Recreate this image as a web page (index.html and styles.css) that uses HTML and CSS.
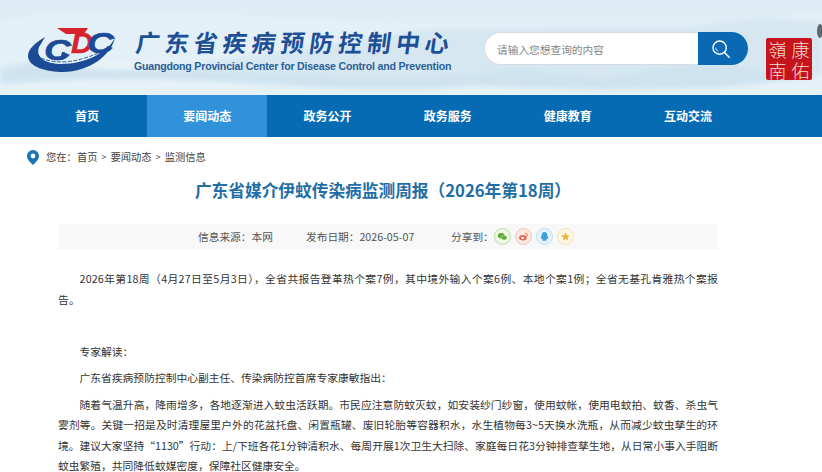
FILE: index.html
```html
<!DOCTYPE html>
<html lang="zh-CN">
<head>
<meta charset="utf-8">
<title>广东省媒介伊蚊传染病监测周报</title>
<link rel="stylesheet" href="styles.css">
</head>
<body>
<header class="masthead">
  <svg class="scenery" viewBox="0 0 822 95" preserveAspectRatio="none" aria-hidden="true">
    <defs>
      <filter id="soft"><feGaussianBlur stdDeviation="2.5"/></filter>
      <filter id="tiny"><feGaussianBlur stdDeviation="0.7"/></filter>
    </defs>
    <g filter="url(#soft)">
      <path d="M0 22 Q90 6 200 14 T470 24 T650 30 L822 14 V60 H0Z" fill="#e3f0f7"/>
      <path d="M0 66 L40 60 L110 72 L240 58 L420 30 L560 28 L680 28 L760 18 L822 22 V95 H0Z" fill="#d6e7f1"/>
      <path d="M0 74 Q30 60 70 66 T180 72 T330 76 T470 74 L520 68 L600 78 L700 62 L822 80 V95 H0Z" fill="#cfe3ef"/>
      <path d="M0 84 Q120 74 260 84 T470 86 L600 90 L720 88 L822 76 V95 H0Z" fill="#e6f2f8"/>
    </g>
    <ellipse class="scenery-tree" cx="820" cy="31" rx="3" ry="7" filter="url(#tiny)"/>
  </svg>
  <div class="brand">
    <svg class="logo" viewBox="0 0 90 50" aria-label="CDC">
      <path d="M18 12 C8 18 1 24 1 31 C1 42 20 47 36 47 C62 47 84 30 88 13 C80 28 58 39 34 39 C20 39 8 33 12 22Z" fill="#1b4a96"/>
      <text class="logo-c" x="17" y="35" textLength="27" lengthAdjust="spacingAndGlyphs">C</text>
      <path d="M30 3 H61 L57 9 H39Z" fill="#d8222c"/>
      <text class="logo-d" x="44" y="28" textLength="22" lengthAdjust="spacingAndGlyphs">D</text>
      <text class="logo-c" x="60" y="28" textLength="27" lengthAdjust="spacingAndGlyphs">C</text>
      <path d="M33 35 L35 27 H38 L36 35Z" fill="#1b4a96"/>
      <path d="M14 33 Q40 44 80 24" fill="none" stroke="#1b4a96" stroke-width=".9" stroke-dasharray="4 1.5"/>
    </svg>
    <div class="brand-names">
      <div class="brand-cn">广东省疾病预防控制中心</div>
      <div class="brand-en">Guangdong Provincial Center for Disease Control and Prevention</div>
    </div>
  </div>
  <div class="tools">
    <form class="search">
      <div class="search-field">请输入您想查询的内容</div>
      <div class="search-button">
        <svg viewBox="0 0 22 22" class="search-icon" aria-hidden="true">
          <circle cx="9.5" cy="9.5" r="7.3" fill="none" stroke="#fff" stroke-width="1.5"/>
          <path d="M14.8 14.8 L20 20" stroke="#fff" stroke-width="1.6" stroke-linecap="round"/>
          <path d="M5.2 9.5 A4.3 4.3 0 0 0 8 13.6" fill="none" stroke="#cfe3f3" stroke-width="1.1"/>
        </svg>
      </div>
    </form>
    <div class="seal"><span>嶺</span><span>康</span><span>南</span><span>佑</span></div>
  </div>
</header>

<nav class="mainnav">
  <a class="nav-item">首页</a>
  <a class="nav-item is-active">要闻动态</a>
  <a class="nav-item">政务公开</a>
  <a class="nav-item">政务服务</a>
  <a class="nav-item">健康教育</a>
  <a class="nav-item">互动交流</a>
</nav>

<div class="crumbs">
  <svg class="pin" viewBox="0 0 12 15" aria-hidden="true">
    <path d="M6 0 A6 6 0 0 1 12 6 C12 10 8 13 6 15 C4 13 0 10 0 6 A6 6 0 0 1 6 0Z" fill="#1778b4"/>
    <circle cx="6" cy="6" r="2.4" fill="#fff"/>
  </svg>
  <span class="crumbs-label">您在&#xFF1A;</span><span>首页</span><span class="sep">&gt;</span><span>要闻动态</span><span class="sep">&gt;</span><span>监测信息</span>
</div>

<main class="article">
  <h1 class="title">广东省媒介伊蚊传染病监测周报&#xFF08;2026年第18周&#xFF09;</h1>
  <div class="meta">
    <span class="meta-source">信息来源&#xFF1A;本网</span>
    <span class="meta-date">发布日期&#xFF1A;2026-05-07</span>
    <span class="meta-share">分享到&#xFF1A;</span>
    <span class="share share-wechat">
      <svg viewBox="0 0 18 18" aria-hidden="true"><ellipse cx="7.5" cy="8" rx="4" ry="3.2" fill="#58a92f"/><ellipse cx="11" cy="10.5" rx="3.4" ry="2.7" fill="#58a92f" stroke="#eef6e6" stroke-width=".6"/></svg>
    </span>
    <span class="share share-weibo">
      <svg viewBox="0 0 18 18" aria-hidden="true"><ellipse cx="8.3" cy="10.5" rx="4.6" ry="3.2" fill="#e0624d"/><ellipse cx="8" cy="10.8" rx="2" ry="1.5" fill="#fbe9e3"/><path d="M10.5 5 A3.4 3.4 0 0 1 14 8.6" fill="none" stroke="#e78a3c" stroke-width="1.2"/></svg>
    </span>
    <span class="share share-qq">
      <svg viewBox="0 0 18 18" aria-hidden="true"><path d="M9 3.6 C11.4 3.6 12.2 5.6 12.2 7.4 C13.4 9.4 13.8 11.4 13 12 L12 11.2 C11.8 12 11.4 12.6 11 13 C11.8 13.4 11.6 14.2 10.4 14.2 H7.6 C6.4 14.2 6.2 13.4 7 13 C6.6 12.6 6.2 12 6 11.2 L5 12 C4.2 11.4 4.6 9.4 5.8 7.4 C5.8 5.6 6.6 3.6 9 3.6Z" fill="#3f9fdc"/></svg>
    </span>
    <span class="share share-star">
      <svg viewBox="0 0 18 18" aria-hidden="true"><path d="M9 4 L10.5 7.4 L14.2 7.8 L11.4 10.2 L12.2 13.8 L9 12 L5.8 13.8 L6.6 10.2 L3.8 7.8 L7.5 7.4Z" fill="#eab63c"/></svg>
    </span>
  </div>
  <div class="body">
    <p class="lead">2026年第18周&#xFF08;4月27日至5月3日&#xFF09;&#xFF0C;全省共报告登革热个案7例&#xFF0C;其中境外输入个案6例、本地个案1例&#xFF1B;全省无基孔肯雅热个案报告。</p>
    <p>&nbsp;</p>
    <p>专家解读&#xFF1A;</p>
    <p>广东省疾病预防控制中心副主任、传染病防控首席专家康敏指出&#xFF1A;</p>
    <p>随着气温升高&#xFF0C;降雨增多&#xFF0C;各地逐渐进入蚊虫活跃期。市民应注意防蚊灭蚊&#xFF0C;如安装纱门纱窗&#xFF0C;使用蚊帐&#xFF0C;使用电蚊拍、蚊香、杀虫气雾剂等。关键一招是及时清理屋里户外的花盆托盘、闲置瓶罐、废旧轮胎等容器积水&#xFF0C;水生植物每3~5天换水洗瓶&#xFF0C;从而减少蚊虫孳生的环境。建议大家坚持&#x201C;1130&#x201D;行动&#xFF1A;上/下班各花1分钟清积水、每周开展1次卫生大扫除、家庭每日花3分钟排查孳生地&#xFF0C;从日常小事入手阻断蚊虫繁殖&#xFF0C;共同降低蚊媒密度&#xFF0C;保障社区健康安全。</p>
  </div>
</main>
</body>
</html>
```

FILE: styles.css
```css
* { box-sizing: border-box; }
html, body { margin: 0; padding: 0; height: 472px; overflow: hidden; background: #fff; }
body { font-family: "Noto Sans CJK SC", "Liberation Sans", sans-serif; color: #333; }

.masthead {
  position: relative;
  height: 95px;
  display: flex;
  justify-content: space-between;
  padding: 22px 10px 0 27px;
  background: linear-gradient(180deg, #dcebf4 0%, #e8f2f8 55%, #e6f1f7 100%);
  overflow: hidden;
}
.scenery { position: absolute; inset: 0; width: 100%; height: 100%; }
.scenery-tree { fill: #5d6b6e; }

.brand { position: relative; display: flex; align-items: flex-start; gap: 17px; }
.logo { width: 90px; height: 50px; margin-top: 3px; }
.logo-c { font: italic 700 30px "Liberation Sans", sans-serif; fill: #1b4a96; stroke: #1b4a96; stroke-width: .5px; }
.logo-d { font: italic 700 30px "Liberation Sans", sans-serif; fill: #d8222c; stroke: #d8222c; stroke-width: .5px; }
.brand-names { display: flex; flex-direction: column; margin-left: 0; }
.brand-cn {
  height: 36px;
  font-size: 24px;
  line-height: 40px;
  font-weight: 700;
  letter-spacing: 4.9px;
  white-space: nowrap;
  color: #1d4f96;
  transform: skewX(-8deg);
  transform-origin: left bottom;
}
.brand-en {
  margin-top: 1px;
  font-family: "Liberation Sans", sans-serif;
  font-size: 10.6px;
  line-height: 14px;
  font-weight: 700;
  letter-spacing: -0.2px;
  color: #2b5f97;
  white-space: nowrap;
}

.tools { position: relative; display: flex; align-items: flex-start; gap: 18px; padding-top: 10px; }
.search { display: flex; width: 264px; height: 33px; }
.search-field {
  flex: 1;
  padding-left: 12px;
  font-size: 10.7px;
  line-height: 33px;
  color: #858585;
  background: #fff;
  border: 1px solid #d5dde2;
  border-right: 0;
  border-radius: 17px 0 0 17px;
}
.search-button {
  width: 50px;
  display: flex;
  align-items: center;
  justify-content: center;
  padding-right: 4px;
  background: #0b69b4;
  border-radius: 0 17px 17px 0;
}
.search-icon { width: 20px; height: 20px; }
.seal {
  width: 46px;
  height: 42px;
  margin-top: 6px;
  display: grid;
  grid-template-columns: 1fr 1fr;
  grid-template-rows: 1fr 1fr;
  place-items: center;
  font-size: 18px;
  line-height: 20px;
  font-weight: 300;
  color: #f3dcd0;
  background: #c6141c;
  border-radius: 2px;
}

.mainnav {
  height: 42px;
  display: flex;
  padding-left: 27px;
  background: #066bb3;
}
.nav-item {
  width: 120.2px;
  font-size: 12px;
  line-height: 42px;
  font-weight: 700;
  text-align: center;
  color: #fff;
}
.is-active { background: #2f92da; }

.crumbs {
  height: 20px;
  margin-top: 10px;
  padding-left: 27px;
  display: flex;
  align-items: center;
  gap: 3px;
  font-size: 10.3px;
  line-height: 20px;
  color: #444;
}
.crumbs-label { margin-right: -3px; }
.pin { width: 12px; height: 15px; margin-right: 4px; }
.sep { font-size: 9px; padding: 0 1px; }

.article { padding: 0 104px 0 58px; width: 822px; }
.title {
  margin: 10px 0 0;
  width: 650px;
  font-size: 16.7px;
  line-height: 26px;
  font-weight: 700;
  text-align: center;
  color: #1f6ea6;
}
.meta {
  width: 660px;
  height: 25px;
  margin-top: 21px;
  padding-left: 140px;
  display: flex;
  align-items: center;
  font-size: 10.7px;
  color: #555;
  background: #f8f8f8;
}
.meta-source { width: 108px; }
.meta-date { width: 145px; }
.meta-share { width: 43px; }
.share {
  width: 17px;
  height: 17px;
  margin-right: 4px;
  border-radius: 50%;
  border: 1px solid;
  display: block;
}
.share svg { display: block; width: 15px; height: 15px; }
.share-wechat { background: #eef6e6; border-color: #bcdca6; }
.share-weibo { background: #fbe9e3; border-color: #f2c4b6; }
.share-qq { background: #e6f3fb; border-color: #b9def3; }
.share-star { background: #fdf6e3; border-color: #f5e2b4; }

.body { width: 660px; margin-top: 19px; font-size: 10.78px; line-height: 20.5px; color: #333; }
.body p { margin: 0 0 5.75px; text-indent: 2em; text-align: justify; }
.body .lead { letter-spacing: .12px; }
```
